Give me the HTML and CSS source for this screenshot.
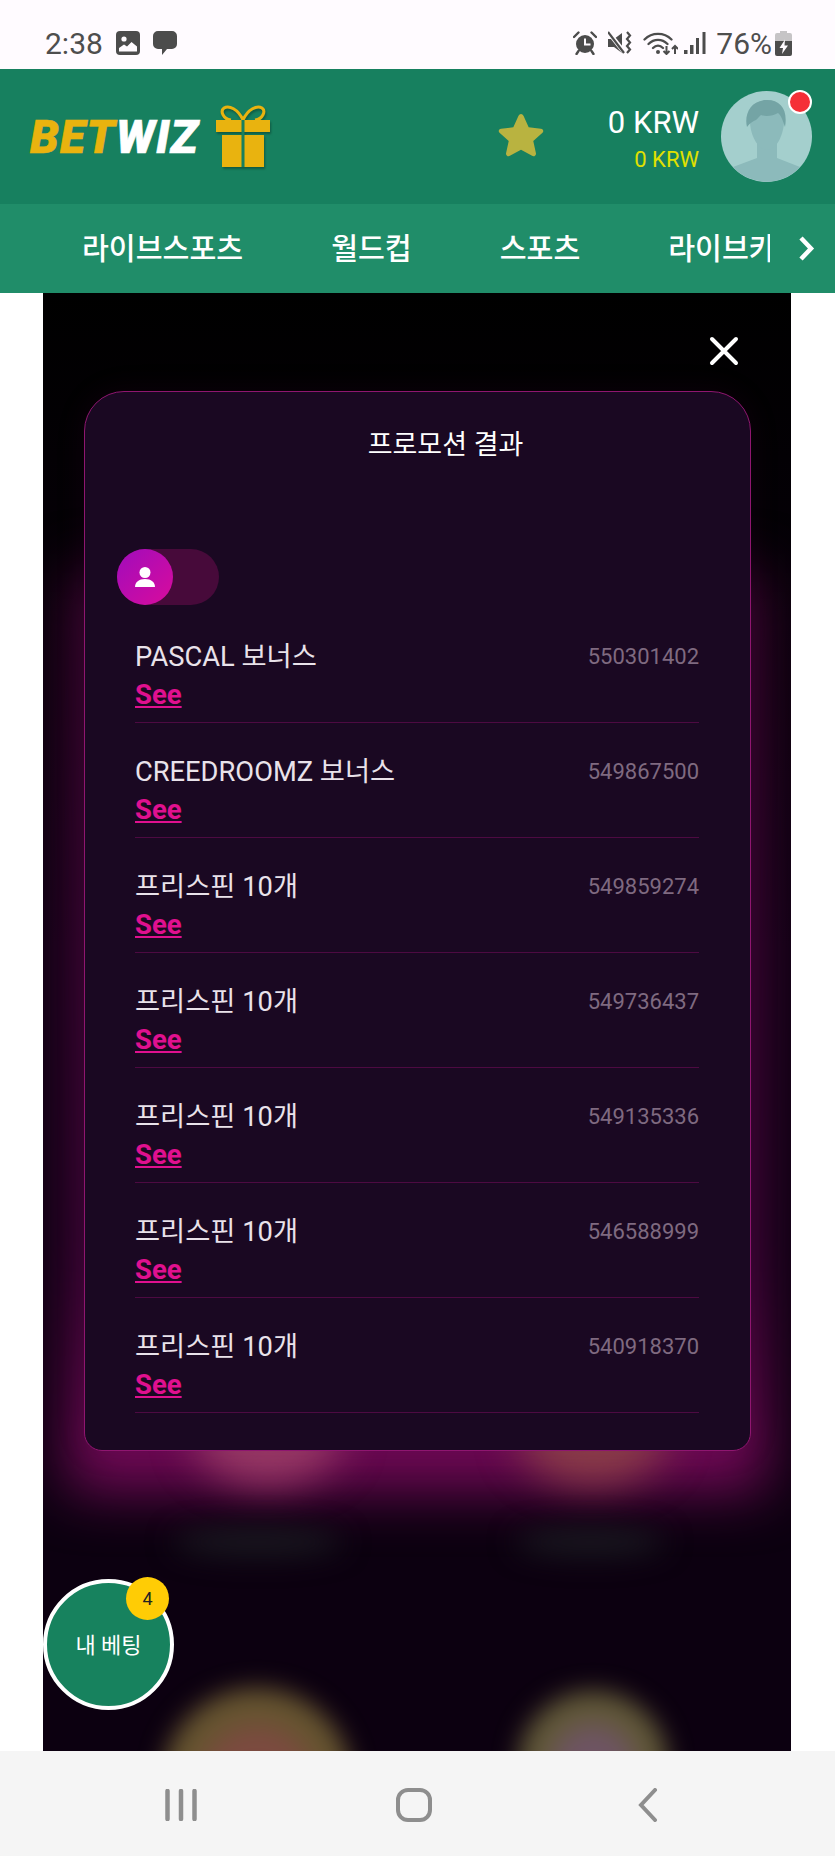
FILE: index.html
```html
<!DOCTYPE html>
<html lang="ko">
<head>
  <meta charset="UTF-8">
  <meta name="viewport" content="width=device-width, initial-scale=1.0">
  <title>BETWIZ</title>
  <link rel="stylesheet" href="styles.css">
</head>
<body>

<!-- Status bar -->
<div class="status">
  <div class="status-left">
    <span class="status-text">2:38</span>
    <svg class="st-pic" viewBox="0 0 24 24"><rect width="24" height="24" rx="4" fill="#4c4c4c"/><circle cx="8" cy="8" r="2.600" fill="#fffbff"/><path d="M3 20.500v-3.500l5-3.500 3 2 4.500-4.500 5.500 4.500v5z" fill="#fffbff"/></svg>
    <svg class="st-msg" viewBox="0 0 24 24"><path d="M5 0h14a5 5 0 0 1 5 5v8a5 5 0 0 1-5 5h-5l-5 6v-6H5a5 5 0 0 1-5-5V5a5 5 0 0 1 5-5z" fill="#4c4c4c"/></svg>
  </div>
  <div class="status-right">
    <svg class="st-alarm" viewBox="0 0 24 24"><circle cx="12" cy="13" r="9" fill="#4c4c4c"/><path d="M1 6l4.500-4.500M23 6l-4.500-4.500M5.500 20l-2 3M18.500 20l2 3" stroke="#4c4c4c" stroke-width="2.400" stroke-linecap="round"/><path d="M12 7.500v6h5.500" stroke="#fffbff" stroke-width="2" fill="none"/></svg>
    <svg class="st-mute" viewBox="0 0 24 24"><path d="M0 8h6l8-6v20l-8-6H0z" fill="#4c4c4c"/><path d="M1 2l15 19" stroke="#fffbff" stroke-width="4.500"/><path d="M0 1l16 21" stroke="#4c4c4c" stroke-width="2.200"/><path d="M19 1l3 3.500-3 3.500 3 3.500-3 3.500 3 3.500-3 3.500" stroke="#4c4c4c" stroke-width="2.200" fill="none"/></svg>
    <svg class="st-wifi" viewBox="0 0 35 24"><path d="M1.500 8.500C9 1 21 1 28.500 8.500M5.500 13c5.500-5.500 13.500-5.500 19 0M10 17c3-3 7-3 10 0" stroke="#4c4c4c" stroke-width="2.300" fill="none" stroke-linecap="round"/><circle cx="15" cy="21" r="2" fill="#4c4c4c"/><path d="M23.500 15v8M20.500 20l3 3 3-3M32 23v-8M29 18l3-3 3 3" stroke="#4c4c4c" stroke-width="2" fill="none"/></svg>
    <svg class="st-signal" viewBox="0 0 22 24"><rect x="0" y="19" width="3.500" height="4" fill="#4c4c4c"/><rect x="6" y="14" width="3.500" height="9" fill="#4c4c4c"/><rect x="12" y="7" width="3" height="16" fill="#4c4c4c"/><rect x="18.500" y="1" width="3" height="22" fill="#4c4c4c"/></svg>
    <span class="status-text pct">76%</span>
    <svg class="st-batt" viewBox="0 0 17 25"><path d="M5 0h7v2h3a2 2 0 0 1 2 2v6H0V4a2 2 0 0 1 2-2h3z" fill="#c6c4c6"/><path d="M0 10h17v13a2 2 0 0 1-2 2H2a2 2 0 0 1-2-2z" fill="#4c4c4c"/><path d="M10 8.500 4.500 17h3.500l-1 6 6-8.500H9.500z" fill="#fffbff"/></svg>
  </div>
</div>

<!-- Header -->
<div class="header">
  <div class="logo">
    <span class="logo-text"><span class="bet">BET</span>WIZ</span>
    <svg class="gift" viewBox="0 0 54 63">
      <path d="M27 15C22 4 13 0 8 3c-4 3-1 11 7 12M27 15C32 4 41 0 46 3c4 3 1 11-7 12" stroke="#e9b30f" stroke-width="3" fill="none"/>
      <rect x="0" y="15" width="54" height="12" fill="#e9b30f"/>
      <rect x="6" y="30" width="42" height="32" fill="#e9b30f"/>
      <rect x="25.500" y="15" width="3" height="47" fill="#17805f"/>
    </svg>
  </div>
  <svg class="star" viewBox="0 0 24 24"><path d="M12 1.500c.6 0 1 .4 1.300 1l2.700 6 6.400.7c1.200.1 1.600 1.400.8 2.100l-4.800 4.300 1.400 6.400c.2 1.100-1 2-2 1.400L12 20.200l-5.800 3.200c-1 .6-2.200-.3-2-1.400l1.400-6.400-4.800-4.300c-.8-.7-.4-2 .8-2.100l6.400-.7 2.700-6c.3-.6.700-1 1.300-1z" fill="#b9b340"/></svg>
  <div class="balance">
    <div class="balance-main">0 KRW</div>
    <div class="balance-bonus">0 KRW</div>
  </div>
  <div class="avatar">
    <svg viewBox="0 0 91 91">
      <circle cx="45.500" cy="45.500" r="45.500" fill="#a4cfcd"/>
      <path d="M36 52h20v15l23 9a45.500 45.500 0 0 1-67 0l24-9z" fill="#8cbabb"/>
      <path d="M29 30c0-14 7-21 17-21s18 8 17 23c-1 13-8 27-17 27s-17-15-17-29z" fill="#8cbabb"/>
      <path d="M26 36c-3-12 3-27 20-27 14 0 21 10 18 27-2-6-4-12-7-14-5 3-12 4-17 2-2 2-3 3-5 5-3 1-6 3-9 7z" fill="#74a4a5"/>
    </svg>
    <span class="avatar-dot"></span>
  </div>
</div>

<!-- Nav -->
<div class="nav">
  <div class="nav-list">
    <a class="nav-item">라이브스포츠</a>
    <a class="nav-item">월드컵</a>
    <a class="nav-item">스포츠</a>
    <a class="nav-item">라이브카지노</a>
  </div>
  <svg class="nav-next" viewBox="0 0 17 27"><path d="M3 3l10 10.500L3 24" stroke="#fff" stroke-width="4.500" fill="none"/></svg>
</div>

<!-- Promo panel -->
<div class="panel">
  <span class="glow"></span>
  <span class="blob blob-pink"></span>
  <span class="blob blob-orange"></span>
  <span class="blob blob-text1"></span>
  <span class="blob blob-text2"></span>
  <span class="blob blob-yellow1"></span>
  <span class="blob blob-yellow2"></span>

  <div class="close-row">
    <svg class="close" viewBox="0 0 30 30"><path d="M3 3l24 24M27 3L3 27" stroke="#fff" stroke-width="4" stroke-linecap="round"/></svg>
  </div>

  <div class="card">
    <h2 class="card-title">프로모션 결과</h2>
    <div class="toggle">
      <span class="toggle-knob">
        <svg viewBox="0 0 20 20"><circle cx="10" cy="5.500" r="5.500" fill="#fff"/><path d="M0 20c0-5 4-8 10-8s10 3 10 8z" fill="#fff"/></svg>
      </span>
    </div>
    <div class="rows">
      <div class="row"><div class="row-top"><span class="row-name">PASCAL 보너스</span><span class="row-id">550301402</span></div><a class="row-see">See</a></div>
      <div class="row"><div class="row-top"><span class="row-name">CREEDROOMZ 보너스</span><span class="row-id">549867500</span></div><a class="row-see">See</a></div>
      <div class="row"><div class="row-top"><span class="row-name">프리스핀 10개</span><span class="row-id">549859274</span></div><a class="row-see">See</a></div>
      <div class="row"><div class="row-top"><span class="row-name">프리스핀 10개</span><span class="row-id">549736437</span></div><a class="row-see">See</a></div>
      <div class="row"><div class="row-top"><span class="row-name">프리스핀 10개</span><span class="row-id">549135336</span></div><a class="row-see">See</a></div>
      <div class="row"><div class="row-top"><span class="row-name">프리스핀 10개</span><span class="row-id">546588999</span></div><a class="row-see">See</a></div>
      <div class="row"><div class="row-top"><span class="row-name">프리스핀 10개</span><span class="row-id">540918370</span></div><a class="row-see">See</a></div>
    </div>
  </div>

  <div class="mybets">
    <span class="mybets-label">내 베팅</span>
    <span class="mybets-count">4</span>
  </div>
</div>

<!-- Android nav -->
<div class="sysnav">
  <svg class="sys-recent" viewBox="0 0 32 32"><path d="M2.500 2v28M16 2v28M29.500 2v28" stroke="#8e8e8e" stroke-width="4.500" stroke-linecap="round"/></svg>
  <svg class="sys-home" viewBox="0 0 36 34"><rect x="2" y="2" width="32" height="30" rx="10" stroke="#8e8e8e" stroke-width="4" fill="none"/></svg>
  <svg class="sys-back" viewBox="0 0 20 34"><path d="M17 2L3 17l14 15" stroke="#8e8e8e" stroke-width="4" fill="none" stroke-linecap="round"/></svg>
</div>

</body>
</html>
```

FILE: styles.css
```css
* {
  box-sizing: border-box;
}
body {
  margin: 0;
  width: 835px;
  height: 1856px;
  overflow: hidden;
  background-color: #fff;
  font-family: Roboto, "Noto Sans CJK KR", sans-serif;
  color: #fff;
}
svg {
  display: block;
  flex: none;
}

/* status bar */
.status {
  height: 69px;
  background-color: #fffbff;
  display: flex;
  justify-content: space-between;
  align-items: center;
  padding: 17px 43px 0 45px;
}
.status-left, .status-right {
  display: flex;
  align-items: center;
}
.status-text {
  font-size: 30px;
  color: #4e4e4e;
}
.st-pic { width: 24px; height: 24px; margin-left: 13px; }
.st-msg { width: 24px; height: 24px; margin-left: 13px; }
.st-alarm { width: 24px; height: 24px; }
.st-mute { width: 24px; height: 24px; margin-left: 11px; }
.st-wifi { width: 35px; height: 24px; margin-left: 11px; }
.st-signal { width: 22px; height: 24px; margin-left: 6px; }
.pct { margin-left: 10px; }
.st-batt { width: 17px; height: 25px; margin-left: 3px; }

/* header */
.header {
  height: 135px;
  background-color: #17805f;
  display: flex;
  align-items: center;
  padding-right: 23px;
}
.logo {
  display: flex;
  align-items: center;
  margin-left: 30px;
  width: 468px;
}
.logo-text {
  font-size: 46px;
  font-weight: 900;
  font-style: italic;
  color: #fff;
  letter-spacing: 1.100px;
  -webkit-text-stroke: 0.6px currentColor;
}
.bet {
  color: #e9b30f;
}
.gift {
  width: 54px;
  height: 63px;
  margin-left: 17px;
  filter: drop-shadow(1px 2px 1px rgba(0, 0, 0, 0.3));
}
.star {
  width: 46px;
  height: 46px;
  margin-bottom: 6px;
}
.balance {
  margin-left: auto;
  margin-top: 6px;
  text-align: right;
}
.balance-main {
  font-size: 31px;
  line-height: 36px;
}
.balance-bonus {
  font-size: 22px;
  line-height: 28px;
  margin-top: 5px;
  color: #e0e000;
}
.avatar {
  position: relative;
  width: 91px;
  height: 91px;
  margin-left: 22px;
}
.avatar-dot {
  position: absolute;
  top: -1px;
  right: 0;
  width: 24px;
  height: 24px;
  border-radius: 50%;
  background-color: #f52f37;
  border: 2px solid #fff;
}

/* nav */
.nav {
  height: 89px;
  background-color: #208d69;
  display: flex;
  align-items: center;
  padding-left: 82px;
}
.nav-list {
  width: 688px;
  display: flex;
  gap: 88px;
  overflow: hidden;
}
.nav-item {
  flex: none;
  font-size: 29.200px;
  font-weight: 500;
  line-height: 40px;
  color: #fff;
}
.nav-next {
  width: 17px;
  height: 27px;
  margin-left: 28px;
}

/* promo panel */
.panel {
  position: relative;
  width: 748px;
  height: 1458px;
  margin-left: 43px;
  overflow: hidden;
  background: linear-gradient(#000 0, #0c0010 45%, #0c0010 100%);
}
.blob {
  position: absolute;
  border-radius: 50%;
}
.blob-pink {
  left: 150px;
  top: 1085px;
  width: 150px;
  height: 105px;
  background-color: #9a3c66;
  filter: blur(20px);
}
.blob-orange {
  left: 475px;
  top: 1085px;
  width: 150px;
  height: 105px;
  background-color: #8c4048;
  filter: blur(20px);
}
.blob-text1 {
  left: 130px;
  top: 1235px;
  width: 170px;
  height: 28px;
  background-color: #1a1820;
  filter: blur(14px);
}
.blob-text2 {
  left: 472px;
  top: 1235px;
  width: 150px;
  height: 28px;
  background-color: #1a1820;
  filter: blur(14px);
}
.blob-yellow1 {
  left: 119px;
  top: 1395px;
  width: 190px;
  height: 190px;
  background: radial-gradient(closest-side, #7c4a40 52%, #665430 68%, #665430 85%);
  filter: blur(12px);
}
.blob-yellow2 {
  left: 475px;
  top: 1398px;
  width: 150px;
  height: 150px;
  background: radial-gradient(closest-side, #6e5463 45%, #615838 66%, #615838 85%);
  filter: blur(12px);
}
.glow {
  position: absolute;
  left: 25px;
  top: 280px;
  width: 698px;
  height: 917px;
  background: linear-gradient(#3a0630, #42063a 75%, #7a0a5c);
  filter: blur(28px);
}
.close-row {
  position: relative;
  height: 98px;
  padding: 43px 0 0 666px;
}
.close {
  width: 30px;
  height: 30px;
}
.card {
  position: relative;
  width: 667px;
  height: 1060px;
  margin-left: 41px;
  padding: 35px 51px 0 50px;
  background-color: #1a0822;
  border: 1.5px solid #8f1670;
  border-radius: 40px 40px 18px 18px;
  box-shadow: 0 0 30px rgba(110, 10, 85, 0.12);
}
.card-title {
  margin: 0;
  padding-left: 57px;
  font-size: 27px;
  font-weight: 400;
  line-height: 36px;
  text-align: center;
}
.toggle {
  width: 102px;
  height: 56px;
  margin: 86px 0 3px -18px;
  border-radius: 28px;
  background-color: #470a3a;
}
.toggle-knob {
  display: flex;
  align-items: center;
  justify-content: center;
  width: 56px;
  height: 56px;
  border-radius: 50%;
  background: linear-gradient(135deg, #a00cbc, #d90c9c);
}
.toggle-knob svg {
  width: 20px;
  height: 20px;
}
.row {
  height: 115px;
  padding-top: 33px;
  border-bottom: 1.5px solid #4d0a42;
}
.row-top {
  display: flex;
  justify-content: space-between;
  align-items: center;
}
.row-name {
  font-size: 27.300px;
  line-height: 32px;
  color: #e9e2ea;
}
.row-id {
  font-size: 22px;
  line-height: 32px;
  color: #7f6a80;
}
.row-see {
  display: inline-block;
  margin-top: 6px;
  font-size: 27.500px;
  font-weight: 700;
  line-height: 32px;
  color: #e0108f;
  text-decoration: underline;
}
.mybets {
  position: absolute;
  left: 0;
  top: 1286px;
  width: 131px;
  height: 131px;
  display: flex;
  align-items: center;
  justify-content: center;
  border-radius: 50%;
  border: 4px solid #fff;
  background-color: #17825e;
}
.mybets-label {
  margin-bottom: 4px;
  font-size: 22px;
}
.mybets-count {
  position: absolute;
  top: -6px;
  right: 1px;
  width: 43px;
  height: 43px;
  display: flex;
  align-items: center;
  justify-content: center;
  border-radius: 50%;
  background-color: #ffcc05;
  color: #222;
  font-size: 18px;
}

/* android nav */
.sysnav {
  height: 105px;
  background-color: #f5f5f5;
  display: flex;
  align-items: center;
  padding: 3px 0 0 165px;
}
.sys-recent { width: 32px; height: 32px; }
.sys-home { width: 36px; height: 34px; margin-left: 199px; }
.sys-back { width: 20px; height: 34px; margin-left: 206px; }
```
